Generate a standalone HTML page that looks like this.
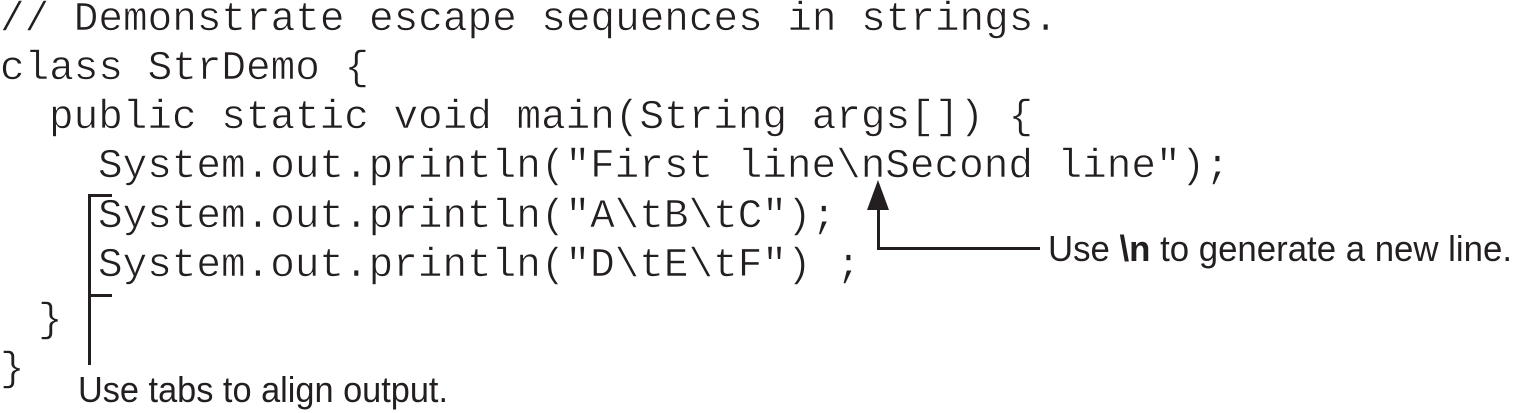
<!DOCTYPE html>
<html><head><meta charset="utf-8"><style>
html,body{margin:0;padding:0;background:#fff;width:1518px;height:413px;overflow:hidden}
</style></head><body>
<svg width="1518" height="413" xmlns="http://www.w3.org/2000/svg">
<g font-family="Liberation Mono, monospace" font-size="41" fill="#231f20" stroke="#fff" stroke-width="0.6" xml:space="preserve">
<text x="0" y="30">// Demonstrate escape sequences in strings.</text>
<text x="0" y="79">class StrDemo {</text>
<text x="49" y="128">public static void main(String args[]) {</text>
<text x="98" y="177">System.out.println("First line\nSecond line");</text>
<text x="98" y="227">System.out.println("A\tB\tC");</text>
<text x="98" y="276">System.out.println("D\tE\tF") ;</text>
<text x="38" y="331">}</text>
<text x="0" y="380">}</text>
</g>
<g stroke="#231f20" stroke-width="3" fill="none">
<path d="M112 195.5H89.5V365"/>
<path d="M112 295.5H89.5"/>
<path d="M878.5 205V248.5H1040"/>
</g>
<polygon points="878,180 867,210 889,210" fill="#231f20"/>
<g font-family="Liberation Sans, sans-serif" font-size="36" fill="#231f20">
<text x="1048" y="261" textLength="464" lengthAdjust="spacingAndGlyphs">Use <tspan font-weight="bold">\n</tspan> to generate a new line.</text>
<text x="78" y="402" textLength="370" lengthAdjust="spacingAndGlyphs">Use tabs to align output.</text>
</g>
</svg>
</body></html>
